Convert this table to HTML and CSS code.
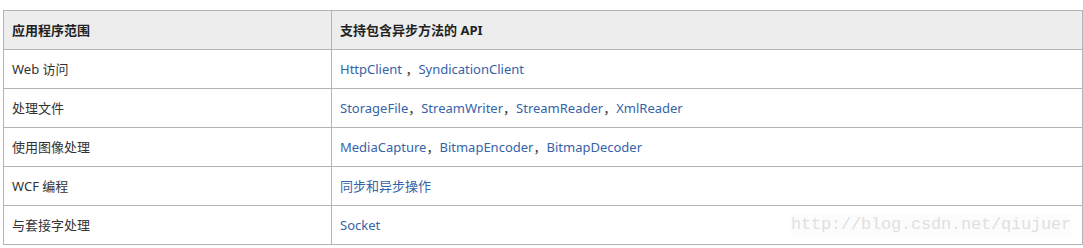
FILE: index.html
```html
<!DOCTYPE html>
<html lang="zh-CN">
<head>
<meta charset="utf-8">
<title>异步 API</title>
<link rel="stylesheet" href="styles.css">
</head>
<body>
<div class="wrap">
  <table class="api-table">
    <thead>
      <tr>
        <th class="col-scope">应用程序范围</th>
        <th>支持包含异步方法的 API</th>
      </tr>
    </thead>
    <tbody>
      <tr>
        <td>Web 访问</td>
        <td><a href="#">HttpClient</a> ，<a href="#">SyndicationClient</a></td>
      </tr>
      <tr>
        <td>处理文件</td>
        <td><a href="#">StorageFile</a>，<a href="#">StreamWriter</a>，<a href="#">StreamReader</a>，<a href="#">XmlReader</a></td>
      </tr>
      <tr>
        <td>使用图像处理</td>
        <td><a href="#">MediaCapture</a>，<a href="#">BitmapEncoder</a>，<a href="#">BitmapDecoder</a></td>
      </tr>
      <tr>
        <td>WCF 编程</td>
        <td><a href="#">同步和异步操作</a></td>
      </tr>
      <tr>
        <td>与套接字处理</td>
        <td><a href="#">Socket</a></td>
      </tr>
    </tbody>
  </table>
  <div class="watermark">http://blog.csdn.net/qiujuer</div>
</div>
</body>
</html>
```

FILE: styles.css
```css
html, body {
  margin: 0;
  padding: 0;
  background: #ffffff;
}

body {
  font-family: "Noto Sans", "Noto Sans CJK SC", sans-serif;
  font-size: 13px;
  color: #333333;
}

.wrap {
  position: relative;
  padding: 10px 0 0 3px;
  width: 1080px;
}

.api-table {
  width: 1080px;
  border-collapse: collapse;
  table-layout: fixed;
}

.api-table th,
.api-table td {
  border: 1px solid #b4b4b4;
  height: 38px;
  padding: 0 0 0 8px;
  text-align: left;
  vertical-align: middle;
  line-height: 18px;
  white-space: nowrap;
}

.api-table th {
  background: #ededed;
  font-weight: 700;
  color: #222222;
}

.api-table .col-scope {
  width: 319px;
}

.api-table a {
  color: #3563a8;
  text-decoration: none;
}

.watermark {
  position: absolute;
  left: 791px;
  top: 214px;
  font-family: "Liberation Mono", monospace;
  font-size: 17px;
  line-height: 22px;
  color: #e0e0e0;
  background: rgba(250, 250, 250, 0.6);
  letter-spacing: -0.2px;
}
```
